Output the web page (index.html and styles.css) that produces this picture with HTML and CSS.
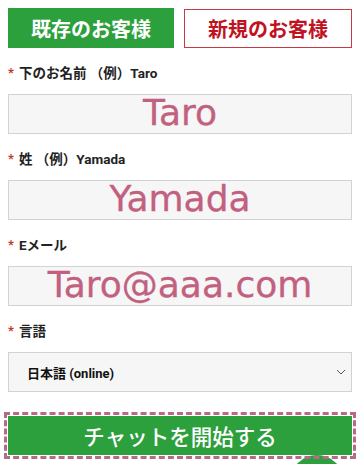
FILE: index.html
```html
<!DOCTYPE html>
<html lang="ja">
<head>
<meta charset="utf-8">
<link rel="stylesheet" href="styles.css">
</head>
<body>
<div class="page">
  <div class="tabs">
    <div class="tab tab-existing">既存のお客様</div>
    <div class="tab tab-new">新規のお客様</div>
  </div>
  <div class="field">
    <div class="label"><span class="req">*</span>下のお名前 （例）Taro</div>
    <div class="input">Taro</div>
  </div>
  <div class="field">
    <div class="label"><span class="req">*</span>姓 （例）Yamada</div>
    <div class="input">Yamada</div>
  </div>
  <div class="field">
    <div class="label"><span class="req">*</span>Eメール</div>
    <div class="input">Taro@aaa.com</div>
  </div>
  <div class="field">
    <div class="label"><span class="req">*</span>言語</div>
    <div class="select">
      <span class="select-text">日本語 (online)</span>
      <svg class="chev" width="10" height="6" viewBox="0 0 10 6"><path d="M1 1 L5 5 L9 1" fill="none" stroke="#555" stroke-width="1"/></svg>
    </div>
  </div>
  <div class="start">チャットを開始する</div>
</div>
<div class="fab-clip"><div class="fab"></div></div>
</body>
</html>
```
FILE: styles.css
```css
html, body {
  margin: 0;
  padding: 0;
  background: #fff;
}
body {
  font-family: Roboto, "Noto Sans CJK JP", sans-serif;
  color: #222;
  position: relative;
  width: 360px;
  height: 464px;
  overflow: hidden;
}
.page {
  padding: 8px 8px 0 8px;
  position: relative;
  z-index: 1;
}
.tabs {
  display: flex;
  gap: 10px;
  height: 40px;
}
.tab {
  flex: 1;
  display: flex;
  align-items: center;
  justify-content: center;
  font-family: "Noto Sans CJK JP", sans-serif;
  font-weight: 700;
  font-size: 20px;
  box-sizing: border-box;
}
.tab-existing {
  background: #2ca03d;
  color: #fff;
}
.tab-new {
  background: #fff;
  color: #c1121f;
  border: 1px solid #c63a44;
  margin-top: 1px;
}
.field {
  margin-top: 15px;
}
.label {
  height: 20px;
  line-height: 20px;
  font-size: 13.5px;
  font-weight: 700;
  color: #222;
  display: flex;
  align-items: center;
}
.req {
  color: #c0392b;
  font-size: 13px;
  width: 11px;
  flex: none;
}
.input {
  margin-top: 11px;
  height: 38px;
  line-height: 35px;
  border: 1px solid #d2d2d2;
  background: #f6f6f6;
  text-align: center;
  font-family: "DejaVu Sans", sans-serif;
  font-size: 36px;
  color: #c2607f;
  white-space: nowrap;
  -webkit-text-stroke: 0.3px #c2607f;
}
.select {
  margin-top: 11px;
  height: 38px;
  border: 1px solid #d2d2d2;
  background: #f6f6f6;
  display: flex;
  align-items: center;
  justify-content: space-between;
  padding: 0 5px 0 18px;
}
.select-text {
  font-size: 13px;
  font-weight: 700;
  color: #111;
}
.chev {
  display: block;
}
.start {
  margin-top: 24px;
  height: 39px;
  background: #2ca03d;
  color: #fff;
  font-family: "Noto Sans CJK JP", sans-serif;
  font-weight: 500;
  font-size: 21.5px;
  display: flex;
  align-items: center;
  justify-content: center;
  outline: 3px dashed #b8698a;
  outline-offset: 1px;
}
.fab-clip {
  position: absolute;
  left: 290px;
  top: 455px;
  width: 54px;
  height: 9px;
  overflow: hidden;
  z-index: 0;
}
.fab {
  width: 54px;
  height: 54px;
  border-radius: 50%;
  background: #2ca03d;
}
```
